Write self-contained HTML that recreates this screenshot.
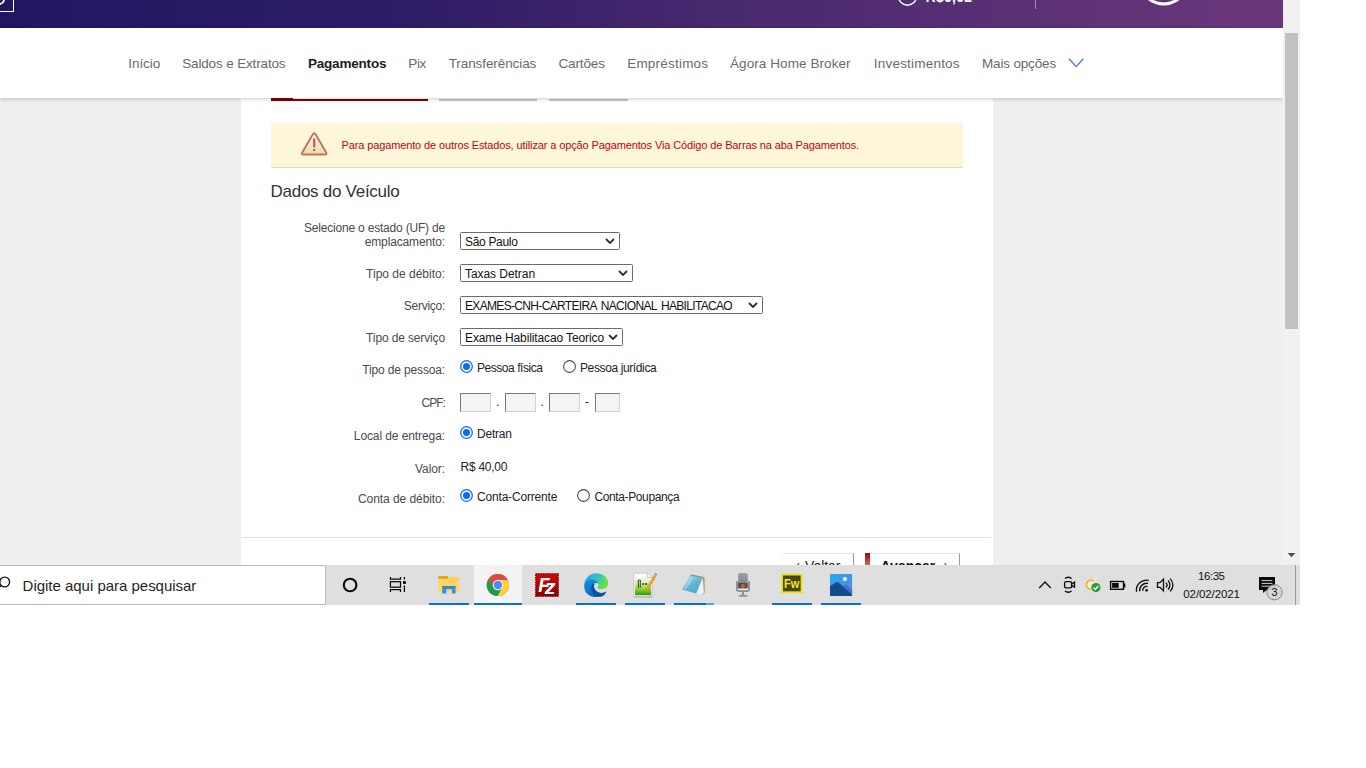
<!DOCTYPE html>
<html lang="pt-BR">
<head>
<meta charset="utf-8">
<title>Pagamentos</title>
<style>
html,body{margin:0;padding:0;background:#fff;}
body{width:1366px;height:768px;position:relative;overflow:hidden;font-family:"Liberation Sans",sans-serif;}
#shot{position:absolute;left:0;top:0;width:1300px;height:605px;overflow:hidden;background:#eeeff1;}
.abs{position:absolute;}
#hdr{left:0;top:0;width:1283px;height:28px;background:linear-gradient(90deg,#201760 0%,#2c1c65 30%,#4b2a70 60%,#6b367a 100%);}
#nav{left:0;top:28px;width:1283px;height:70px;background:#fff;box-shadow:0 1px 4px rgba(0,0,0,.22);}
.nv{position:absolute;top:56px;font-size:13.5px;color:#6a6a6a;white-space:nowrap;line-height:16px;}
.nv.b{color:#1c1c1c;font-weight:bold;}
#card{left:241px;top:98px;width:752px;height:467px;background:#fff;}
.lbl{position:absolute;width:300px;text-align:right;font-size:12px;line-height:14px;color:#4a4a4a;white-space:nowrap;}
.txt{position:absolute;font-size:12px;line-height:14px;color:#222;white-space:nowrap;}
.sel{position:absolute;height:16px;border:1px solid #6b6b6b;border-radius:1.5px;background:#fff;font-size:12px;line-height:16px;color:#111;box-sizing:content-box;white-space:nowrap;}
.sel span{position:absolute;left:4px;top:0.5px;}
.sel svg{position:absolute;right:4px;top:5px;}
.inp{position:absolute;height:17px;border:1px solid #d2d2d2;border-top-color:#767676;border-left-color:#767676;background:#f4f4f4;}
.rad{position:absolute;width:11px;height:11px;border:1px solid #555;border-radius:50%;background:#fff;}
.rad.on{border-color:#1a73e8;}
.rad.on::after{content:"";position:absolute;left:2px;top:2px;width:7px;height:7px;border-radius:50%;background:#1a73e8;}
#task{left:0;top:565px;width:1300px;height:40px;background:#dfdfdf;}
</style>
</head>
<body>
<div id="shot">
  <!-- page content card -->
  <div id="card" class="abs"></div>
<div class="abs" style="left:271px;top:98px;width:22px;height:3px;background:#850000"></div>
<div class="abs" style="left:293px;top:99px;width:135px;height:2px;background:#850000"></div>
<div class="abs" style="left:439px;top:99px;width:98px;height:2px;background:#c4c4c4"></div>
<div class="abs" style="left:549px;top:99px;width:79px;height:2px;background:#c4c4c4"></div>
<div class="abs" style="left:271px;top:123px;width:692px;height:44px;background:#fef6d9;border-bottom:1px solid #e3d9b8"></div>
<svg class="abs" style="left:299px;top:130px" width="30" height="27" viewBox="0 0 30 27"><defs><linearGradient id="wg" x1="0" y1="0" x2="0" y2="1"><stop offset="0" stop-color="#fffbe8"/><stop offset="1" stop-color="#e9dcae"/></linearGradient><linearGradient id="ws" x1="0" y1="0" x2="0" y2="1"><stop offset="0" stop-color="#c86a72"/><stop offset="1" stop-color="#bb7858"/></linearGradient></defs><path d="M13.7 4.5 Q15.2 2 16.7 4.5 L27.2 22.4 Q28.3 24.5 26 24.5 L4.4 24.5 Q2.1 24.5 3.2 22.4 Z" fill="url(#wg)" stroke="url(#ws)" stroke-width="1.9" stroke-linejoin="round"/><rect x="14.1" y="8.2" width="2.2" height="9.3" rx="0.8" fill="#c0603e"/><rect x="14" y="19" width="2.4" height="2.1" rx="0.6" fill="#c0603e"/></svg>
<div class="abs" style="left:341.5px;top:138px;font-size:11px;line-height:14px;color:#c00018;white-space:nowrap;letter-spacing:-0.123px">Para pagamento de outros Estados, utilizar a opção Pagamentos Via Código de Barras na aba Pagamentos.</div>
<div class="abs" style="left:270.5px;top:181px;font-size:17px;line-height:22px;color:#333;white-space:nowrap;letter-spacing:-0.267px">Dados do Veículo</div>
<div class="lbl" style="left:145px;top:221px;letter-spacing:-0.192px;margin-right:0">Selecione o estado (UF) de</div>
<div class="lbl" style="left:145px;top:235px;letter-spacing:-0.135px;margin-right:0">emplacamento:</div>
<div class="lbl" style="left:145px;top:267px;letter-spacing:-0.003px;margin-right:0">Tipo de débito:</div>
<div class="lbl" style="left:145px;top:299px;letter-spacing:-0.270px;margin-right:0">Serviço:</div>
<div class="lbl" style="left:145px;top:331px;letter-spacing:-0.136px;margin-right:0">Tipo de serviço</div>
<div class="lbl" style="left:145px;top:363px;letter-spacing:-0.143px;margin-right:0">Tipo de pessoa:</div>
<div class="lbl" style="left:145px;top:396px;letter-spacing:-0.960px;margin-right:0">CPF:</div>
<div class="lbl" style="left:145px;top:429px;letter-spacing:-0.091px;margin-right:0">Local de entrega:</div>
<div class="lbl" style="left:145px;top:462px;letter-spacing:-0.078px;margin-right:0">Valor:</div>
<div class="lbl" style="left:145px;top:492px;letter-spacing:-0.067px;margin-right:0">Conta de débito:</div>
<div class="sel" style="left:460px;top:232px;width:158px"><span style="letter-spacing:-0.321px">São Paulo</span><svg width="10" height="6" viewBox="0 0 10 6"><path d="M1 1 L5 5 L9 1" fill="none" stroke="#2e2e2e" stroke-width="1.8"/></svg></div>
<div class="sel" style="left:460px;top:264px;width:171px"><span style="letter-spacing:-0.058px">Taxas Detran</span><svg width="10" height="6" viewBox="0 0 10 6"><path d="M1 1 L5 5 L9 1" fill="none" stroke="#2e2e2e" stroke-width="1.8"/></svg></div>
<div class="sel" style="left:460px;top:296px;width:301px"><span style="letter-spacing:-0.67px;word-spacing:2px">EXAMES-CNH-CARTEIRA NACIONAL HABILITACAO</span><svg width="10" height="6" viewBox="0 0 10 6"><path d="M1 1 L5 5 L9 1" fill="none" stroke="#2e2e2e" stroke-width="1.8"/></svg></div>
<div class="sel" style="left:460px;top:328px;width:161px"><span style="letter-spacing:-0.114px">Exame Habilitacao Teorico</span><svg width="10" height="6" viewBox="0 0 10 6"><path d="M1 1 L5 5 L9 1" fill="none" stroke="#2e2e2e" stroke-width="1.8"/></svg></div>
<svg class="abs" style="left:460px;top:360px" width="13" height="13" viewBox="0 0 13 13"><circle cx="6.5" cy="6.5" r="5.8" fill="#fff" stroke="#0a6cf5" stroke-width="1.3"/><circle cx="6.5" cy="6.5" r="3.5" fill="#0a6cf5"/></svg>
<div class="txt" style="left:477px;top:360.8px;letter-spacing:-0.460px">Pessoa física</div>
<svg class="abs" style="left:563px;top:360px" width="13" height="13" viewBox="0 0 13 13"><circle cx="6.5" cy="6.5" r="5.9" fill="#fff" stroke="#4d4d4d" stroke-width="1.1"/></svg>
<div class="txt" style="left:580px;top:360.8px;letter-spacing:-0.383px">Pessoa jurídica</div>
<div class="inp" style="left:460px;top:393px;width:29px"></div>
<div class="inp" style="left:505px;top:393px;width:29px"></div>
<div class="inp" style="left:549px;top:393px;width:29px"></div>
<div class="inp" style="left:595px;top:393px;width:23px"></div>
<div class="txt" style="left:496px;top:395px">.</div><div class="txt" style="left:540.5px;top:395px">.</div><div class="txt" style="left:585px;top:395px">-</div>
<svg class="abs" style="left:460px;top:426.3px" width="13" height="13" viewBox="0 0 13 13"><circle cx="6.5" cy="6.5" r="5.8" fill="#fff" stroke="#0a6cf5" stroke-width="1.3"/><circle cx="6.5" cy="6.5" r="3.5" fill="#0a6cf5"/></svg>
<div class="txt" style="left:477px;top:427px;letter-spacing:-0.205px">Detran</div>
<div class="txt" style="left:460.5px;top:459.5px;letter-spacing:-0.250px">R$ 40,00</div>
<svg class="abs" style="left:460px;top:489px" width="13" height="13" viewBox="0 0 13 13"><circle cx="6.5" cy="6.5" r="5.8" fill="#fff" stroke="#0a6cf5" stroke-width="1.3"/><circle cx="6.5" cy="6.5" r="3.5" fill="#0a6cf5"/></svg>
<div class="txt" style="left:477px;top:489.5px;letter-spacing:-0.180px">Conta-Corrente</div>
<svg class="abs" style="left:577px;top:489px" width="13" height="13" viewBox="0 0 13 13"><circle cx="6.5" cy="6.5" r="5.9" fill="#fff" stroke="#4d4d4d" stroke-width="1.1"/></svg>
<div class="txt" style="left:594.5px;top:489.5px;letter-spacing:-0.384px">Conta-Poupança</div>
<div class="abs" style="left:241px;top:537px;width:750px;height:1px;background:#e2e2e2"></div>
<div class="abs" style="left:783px;top:553px;width:70px;height:30px;background:#fff;border-top:1px solid #e4e4e4;border-right:1px solid #9a9a9a"></div>
<div class="abs" style="left:795.5px;top:556px;font-size:14px;line-height:18px;color:#c00000;">‹</div>
<div class="abs" style="left:805px;top:557px;font-size:14px;line-height:18px;color:#222;letter-spacing:-0.102px">Voltar</div>
<div class="abs" style="left:865px;top:553px;width:94px;height:30px;background:#fff;border-top:1px solid #e4e4e4;border-right:1px solid #9a9a9a"></div>
<div class="abs" style="left:865px;top:553px;width:5px;height:30px;background:linear-gradient(#9a0808 0px,#b43434 6px,#c96666 12px)"></div>
<div class="abs" style="left:880.5px;top:557px;font-size:14px;line-height:18px;color:#111;font-weight:bold;">Avançar</div>
<div class="abs" style="left:943.5px;top:556px;font-size:14px;line-height:18px;color:#c00000;">›</div>

  <!-- header + nav -->
  <div id="hdr" class="abs"></div>
  <div class="abs" style="left:-2px;top:-6px;width:14px;height:16px;border:1px solid #fff"></div>
<svg class="abs" style="left:0;top:0" width="14" height="6" viewBox="0 0 14 6"><circle cx="-1" cy="-0.9" r="5.1" fill="none" stroke="#fff" stroke-width="1.8"/></svg>
<svg class="abs" style="left:896px;top:0" width="24" height="8" viewBox="0 0 24 8"><circle cx="11.5" cy="-3.76" r="9" fill="none" stroke="#fff" stroke-width="1.4"/></svg>
<div class="abs" style="left:925.5px;top:-11.4px;font-size:14px;line-height:16px;font-weight:bold;color:#fff;white-space:nowrap;letter-spacing:0.3px">R$0,02</div>
<div class="abs" style="left:1035px;top:0;width:1px;height:9px;background:#a58bb4"></div>
<svg class="abs" style="left:1144px;top:0" width="40" height="8" viewBox="0 0 40 8"><circle cx="19.7" cy="-19.7" r="23.7" fill="none" stroke="#fff" stroke-width="3"/></svg>
<div id="nav" class="abs"></div>
  <div class="nv" style="left:128.2px;letter-spacing:-0.030px">Início</div>
  <div class="nv" style="left:182.2px;letter-spacing:-0.148px">Saldos e Extratos</div>
  <div class="nv b" style="left:307.9px;letter-spacing:-0.188px">Pagamentos</div>
  <div class="nv" style="left:408.2px;letter-spacing:-0.290px">Pix</div>
  <div class="nv" style="left:448.7px;letter-spacing:-0.086px">Transferências</div>
  <div class="nv" style="left:558.5px;letter-spacing:-0.140px">Cartões</div>
  <div class="nv" style="left:627.2px;letter-spacing:0.212px">Empréstimos</div>
  <div class="nv" style="left:730.0px;letter-spacing:0.082px">Ágora Home Broker</div>
  <div class="nv" style="left:873.8px;letter-spacing:0.208px">Investimentos</div>
  <div class="nv" style="left:982.0px;letter-spacing:-0.164px">Mais opções</div>
  <svg class="abs" style="left:1066px;top:56px" width="20" height="14" viewBox="0 0 20 14"><path d="M3 2.8 L10.2 10.6 L17.4 2.8" fill="none" stroke="#4a6af0" stroke-width="1.3"/></svg>

  <!-- scrollbar -->
  <div class="abs" style="left:1283px;top:0;width:17px;height:565px;background:#f1f1f1"></div>
  <div class="abs" style="left:1285px;top:33px;width:13px;height:296px;background:#c1c1c1"></div>
  <!-- taskbar -->
  <div id="task" class="abs"></div>
<div class="abs" style="left:-1px;top:565px;width:325px;height:38px;background:#fff;border:1px solid #b9b9b9"></div>
<svg class="abs" style="left:-4px;top:574px" width="18" height="22" viewBox="0 0 18 22"><circle cx="8.7" cy="8" r="4.9" fill="none" stroke="#111" stroke-width="1.3"/><path d="M5.2 11.6 L0 17" stroke="#111" stroke-width="1.3"/></svg>
<div class="abs" style="left:22.6px;top:575.5px;font-size:15px;line-height:19px;color:#1f1f1f;white-space:nowrap;letter-spacing:-0.02px">Digite aqui para pesquisar</div>
<div class="abs" style="left:474px;top:565px;width:48px;height:40px;background:#f3f3f3"></div>
<div class="abs" style="left:429px;top:603px;width:40px;height:2px;background:#0b6fd8"></div>
<div class="abs" style="left:474px;top:603px;width:48px;height:2px;background:#0b6fd8"></div>
<div class="abs" style="left:576px;top:603px;width:40px;height:2px;background:#0b6fd8"></div>
<div class="abs" style="left:625px;top:603px;width:40px;height:2px;background:#0b6fd8"></div>
<div class="abs" style="left:674px;top:603px;width:40px;height:2px;background:#0b6fd8"></div>
<div class="abs" style="left:772px;top:603px;width:40px;height:2px;background:#0b6fd8"></div>
<div class="abs" style="left:821px;top:603px;width:40px;height:2px;background:#0b6fd8"></div>
<div class="abs" style="left:706px;top:603px;width:8px;height:2px;background:#5aa2ea"></div>
<svg class="abs" style="left:340px;top:575px" width="20" height="20" viewBox="0 0 20 20"><circle cx="10.1" cy="10" r="6.3" fill="none" stroke="#0a0a0a" stroke-width="2.1"/></svg>
<svg class="abs" style="left:388px;top:575px" width="20" height="20" viewBox="0 0 20 20"><g fill="none" stroke="#0a0a0a" stroke-width="1.25"><path d="M2.4 2 V4 H12.5 V2"/><rect x="2.4" y="6.7" width="10.1" height="5.5"/><path d="M2.4 16.9 V14.7 H12.5 V16.9"/><path d="M16.4 2 V4.5 M16.4 10.4 V16.9"/></g><rect x="15" y="6.1" width="2.9" height="2.8" fill="#0a0a0a"/></svg>
<svg class="abs" style="left:437px;top:574px" width="24" height="22" viewBox="0 0 24 22"><defs><linearGradient id="fg" x1="0" y1="0" x2="0" y2="1"><stop offset="0" stop-color="#fbd25c"/><stop offset="1" stop-color="#fdd970"/></linearGradient></defs><rect x="1.3" y="3" width="20.8" height="15.6" rx="0.7" fill="url(#fg)"/><path d="M1.3 2.6 Q1.3 2 1.9 2 H9.8 Q10.4 2 10.6 2.5 L11.2 4.7 H1.3Z" fill="#e3a20d"/><path d="M5.2 12.6 Q5.2 12 5.8 12 H17.9 Q18.5 12 18.5 12.6 V19.5 H15 V15.3 H9.3 V19.5 H5.2 Z" fill="#3b8edb"/><path d="M5.2 12.6 Q5.2 12 5.8 12 H17.9 Q18.5 12 18.5 12.6 V13.6 H5.2Z" fill="#3384d0"/></svg>
<svg class="abs" style="left:486px;top:573px" width="24" height="24" viewBox="-12.2 -12.3 24.6 24.6"><circle r="11.4" fill="#dd4b3e"/><path d="M-4.50 2.60 L-9.58 -6.19 A11.4 11.4 0 0 1 10.14 -5.20 L0.00 -5.20 Z" fill="#dd4b3e"/><path d="M0.00 -5.20 L10.14 -5.20 A11.4 11.4 0 0 1 -0.57 11.39 L4.50 2.60 Z" fill="#fdd03b"/><path d="M4.50 2.60 L-0.57 11.39 A11.4 11.4 0 0 1 -9.58 -6.19 L-4.50 2.60 Z" fill="#1a9c55"/><circle r="5.3" fill="#f3f3f3"/><circle r="4.25" fill="#4a8af4"/></svg>
<svg class="abs" style="left:535px;top:573px" width="24" height="24" viewBox="0 0 24 24"><defs><linearGradient id="fzg" x1="0" y1="0" x2="0" y2="1"><stop offset="0" stop-color="#c90808"/><stop offset="0.5" stop-color="#b00606"/><stop offset="1" stop-color="#860000"/></linearGradient></defs><rect x="0.6" y="0.6" width="22.8" height="22.8" fill="url(#fzg)" stroke="#8e0a0a" stroke-width="1.2" stroke-dasharray="1.3 1.1"/><text font-family="Liberation Sans, sans-serif" font-size="21" font-weight="bold" font-style="italic" fill="#fff"><tspan x="3.3" y="19" textLength="11.3" lengthAdjust="spacingAndGlyphs">F</tspan><tspan x="9.8" y="21" textLength="10.8" lengthAdjust="spacingAndGlyphs">z</tspan></text></svg>
<svg class="abs" style="left:584px;top:572.6px" width="24.4" height="24.4" viewBox="0 0 24.4 24.4"><defs><linearGradient id="eg1" x1="0" y1="0.2" x2="1" y2="0.6"><stop offset="0" stop-color="#2aa4ee"/><stop offset="0.5" stop-color="#2fc0c8"/><stop offset="0.85" stop-color="#5fe04e"/><stop offset="1" stop-color="#63e24a"/></linearGradient><linearGradient id="eg2" x1="0" y1="0" x2="0.3" y2="1"><stop offset="0" stop-color="#1590e0"/><stop offset="1" stop-color="#0a68c6"/></linearGradient></defs>
<path d="M0.3 11 C1 4.6 6.2 0.2 12.4 0.2 C19.4 0.2 24.2 5 24.2 9.8 C24.2 13.8 21 16 17.6 16 C15.2 16 13.5 15.3 13.1 14.7 C14.4 13.8 14.9 12.2 14.3 10.8 C13.4 8.6 10.8 7 7.8 7 C4.4 7 1.2 8.6 0.3 11Z" fill="url(#eg1)"/>
<path d="M0.2 12.4 C0.2 9.2 3 6.6 7.4 6.6 C10.8 6.6 13.6 8.4 14.4 10.8 C13 9.6 10.4 9.8 9.4 12 C8 15.6 10.5 21 16.4 22.4 C13.6 24.8 7 25 3 20.6 C1 18.4 0.2 15.4 0.2 12.4Z" fill="url(#eg2)"/>
<path d="M9.3 10.4 C7.4 11.4 6.6 14.4 7.4 17.2 C8.8 22 13.8 24.8 18 23.4 C20.4 22.6 22.2 20.2 22.3 18.2 C19.8 20.2 16 20.6 13.2 18.6 C10.2 16.4 9.4 13.2 10.6 11 C10.2 10.6 9.8 10.4 9.3 10.4Z" fill="#0d53a4"/></svg>
<svg class="abs" style="left:633px;top:572px" width="26" height="26" viewBox="0 0 26 26"><defs><linearGradient id="ng" x1="0" y1="0" x2="0" y2="1"><stop offset="0" stop-color="#ffffff"/><stop offset="0.2" stop-color="#eef4ee"/><stop offset="0.45" stop-color="#d6ee9a"/><stop offset="0.75" stop-color="#7ccc28"/><stop offset="1" stop-color="#2a9a10"/></linearGradient></defs><path d="M0.9 24.9 H19.6" stroke="#8e8e8e" stroke-width="0.9"/><path d="M0.9 1.2 H14.2 L19.3 5.6 V24.3 H0.9 Z" fill="#fff" stroke="#bdbdbd" stroke-width="0.7"/><path d="M2 2.4 H13.6 L18.2 6.4 V23.2 H2 Z" fill="url(#ng)"/><path d="M14.2 1.4 V5.6 H19" fill="#f4f4f4" stroke="#a8a8a8" stroke-width="0.6"/><path d="M5.3 8 V15.6 M7.3 8 V15.6" stroke="#222" stroke-width="0.9"/><path d="M5.3 8 H7.3" stroke="#444" stroke-width="0.7"/><path d="M9.2 12 H11.2 M12.2 12 H14.2" stroke="#2a2a2a" stroke-width="1.5"/><path d="M21.2 3.2 L23 4.4 L14.2 18.6 L12.6 19.8 L12.7 17.4 Z" fill="#f2a51c" stroke="#c27a12" stroke-width="0.4"/><path d="M21.2 3.2 L23 4.4 L23.6 3.2 L21.9 2.1Z" fill="#9aa7b4"/><path d="M21.9 2.1 L23.6 3.2 L23.9 2.2 C23.6 1.4 22.8 1.1 22.3 1.3Z" fill="#d63a48"/></svg>
<svg class="abs" style="left:681px;top:573px" width="26" height="24" viewBox="0 0 26 24"><defs><linearGradient id="np" x1="0.2" y1="0" x2="0.7" y2="1"><stop offset="0" stop-color="#9fd8ea"/><stop offset="0.5" stop-color="#63b6d2"/><stop offset="1" stop-color="#4fa6c6"/></linearGradient></defs><path d="M22 3.9 L23.5 5 L23.7 19.6 L21 22 Z" fill="#b58a4a"/><path d="M21.6 4.4 L22.9 19.6 L20.2 22.2 L15.1 20.4 Z" fill="#eef3f6" stroke="#c9d3d9" stroke-width="0.4"/><path d="M9.9 1.6 L22 3.9 L15.1 20.6 L1 16.4 Z" fill="url(#np)"/><path d="M9.9 1.4 L22.2 3.7 L21.8 5 L9.5 2.7Z" fill="#8c9496"/><path d="M9 4 L13 5 L5 16.4 L2.4 15.6Z" fill="#b5e2ef" opacity="0.55"/></svg>
<svg class="abs" style="left:733px;top:572px" width="20" height="26" viewBox="0 0 20 26"><defs><linearGradient id="mg" x1="0" y1="0" x2="0" y2="1"><stop offset="0" stop-color="#9da1a7"/><stop offset="1" stop-color="#84888e"/></linearGradient></defs><path d="M4 9.3 V17.6 Q4 19 5.4 19 H14.6 Q16 19 16 17.6 V9.3" fill="#f4f4f4" stroke="#8d9198" stroke-width="2"/><path d="M5.1 3 Q5.1 1.1 7 1.1 H12.9 Q14.8 1.1 14.8 3 V11 H5.1Z" fill="url(#mg)"/><path d="M5.1 10.9 H14.8 V15.6 Q14.8 16.6 13.8 16.6 H6.1 Q5.1 16.6 5.1 15.6Z" fill="#4b4e54"/><circle cx="9.9" cy="13.9" r="2" fill="#f0541a"/><rect x="9" y="20" width="2" height="3.2" fill="#8d9198"/><rect x="5.8" y="22.9" width="8.4" height="1.8" fill="#8d9198"/></svg>
<svg class="abs" style="left:780px;top:573px" width="24" height="22" viewBox="0 0 24 22"><rect x="2.1" y="1.6" width="19.4" height="17.6" fill="#48451a" stroke="#e9e50a" stroke-width="1.8"/><text x="4" y="15.1" font-family="Liberation Sans, sans-serif" font-size="12.4" font-weight="bold" fill="#f2ec1e" textLength="15.4" lengthAdjust="spacingAndGlyphs">Fw</text></svg>
<svg class="abs" style="left:829px;top:573px" width="24" height="24" viewBox="0 0 24 24"><defs><linearGradient id="pg" x1="0" y1="0" x2="1" y2="0.4"><stop offset="0" stop-color="#27a9ea"/><stop offset="1" stop-color="#4e8fe2"/></linearGradient></defs><rect x="1" y="1" width="22.1" height="22" rx="0.8" fill="url(#pg)"/><path d="M14.2 13.8 L16.6 12 H18 L23.1 16.6 V22Z" fill="#4c6ccc"/><path d="M1 13.2 L7 9.2 H9.4 L23.1 21.8 V22.2 Q23.1 23 22.3 23 H1.8 Q1 23 1 22.2Z" fill="#154b8c"/><circle cx="15.9" cy="6.1" r="2" fill="#fff"/></svg>
<svg class="abs" style="left:1037px;top:578px" width="16" height="12" viewBox="0 0 16 12"><path d="M2.2 10 L8 4 L13.8 10" fill="none" stroke="#111" stroke-width="1.3"/></svg>
<svg class="abs" style="left:1062px;top:575px" width="14" height="20" viewBox="0 0 14 20"><g fill="none" stroke="#0c0c0c" stroke-width="1.35"><rect x="2.6" y="6.6" width="7" height="6.2" rx="1.3"/><path d="M9.6 8.8 L12.5 7.2 V12.2 L9.6 10.6"/><path d="M3 3.6 C4.6 1.8 8 1.8 9.6 3.6"/><path d="M3 15.9 C4.6 17.7 8 17.7 9.6 15.9"/></g></svg>
<svg class="abs" style="left:1084px;top:576px" width="18" height="18" viewBox="0 0 18 18"><circle cx="7" cy="8.8" r="4.7" fill="#ececec" stroke="#f3f3f3" stroke-width="1.6"/><path d="M7 13.5 A4.7 4.7 0 1 1 10.6 5.8" fill="none" stroke="#f6b414" stroke-width="1.7"/><path d="M9.6 6.2 L13.6 1.2" stroke="#f7efc8" stroke-width="0.9"/><circle cx="11.9" cy="11.6" r="4.6" fill="#1f9e3a"/><path d="M9.5 11.6 L11.3 13.4 L14.3 10" fill="none" stroke="#fff" stroke-width="1.4"/></svg>
<svg class="abs" style="left:1109px;top:580px" width="18" height="12" viewBox="0 0 18 12"><rect x="1.6" y="1.5" width="12.9" height="7.8" fill="none" stroke="#0a0a0a" stroke-width="1.4"/><rect x="3.1" y="3" width="6.6" height="4.8" fill="#0a0a0a"/><rect x="15" y="3.5" width="1.4" height="4" fill="#0a0a0a"/></svg>
<svg class="abs" style="left:1134px;top:578px" width="16" height="16" viewBox="0 0 16 16"><g fill="none" stroke="#0c0c0c" stroke-width="1.3"><path d="M2.50 13.72 A10.2 10.2 0 0 1 14.72 2.32"/><path d="M5.67 13.27 A7 7 0 0 1 14.06 5.45"/><path d="M8.74 12.84 A3.9 3.9 0 0 1 13.41 8.49"/></g><circle cx="12.6" cy="12.3" r="1.35" fill="#0c0c0c"/></svg>
<svg class="abs" style="left:1156px;top:577px" width="19" height="16" viewBox="0 0 19 16"><g fill="none" stroke="#0c0c0c" stroke-width="1.3"><path d="M1.5 5.6 H4 L7.5 2.1 V13.9 L4 10.4 H1.5 Z"/><path d="M9.9 5.6 A3.4 3.4 0 0 1 9.9 10.4"/><path d="M12 3.6 A6 6 0 0 1 12 12.4"/><path d="M14.1 1.6 A8.8 8.8 0 0 1 14.1 14.4"/></g></svg>
<div class="abs" style="left:1159.3px;top:568.5px;width:104px;text-align:center;font-size:11.5px;line-height:14px;color:#111;white-space:nowrap;letter-spacing:-0.45px">16:35</div>
<div class="abs" style="left:1159.6px;top:586.7px;width:104px;text-align:center;font-size:11.5px;line-height:14px;color:#111;white-space:nowrap;letter-spacing:-0.1px">02/02/2021</div>
<svg class="abs" style="left:1257px;top:575px" width="28" height="28" viewBox="0 0 28 28"><path d="M2 2 H18 V15 H9.6 L6 18 V15 H2 Z" fill="#0a0a0a"/><path d="M4.6 5.6 H15.4 M4.6 8.4 H15.4 M4.6 11.2 H15.4" stroke="#e6e6e6" stroke-width="0.9"/><circle cx="17.5" cy="17.3" r="7.6" fill="#d6d6d6" fill-opacity="0.93" stroke="#7a7a7a" stroke-width="0.9"/><text x="14.6" y="21.2" font-family="Liberation Sans, sans-serif" font-size="11" fill="#111">3</text></svg>
<div class="abs" style="left:1295px;top:565px;width:1px;height:40px;background:#9c9c9c"></div>
<svg class="abs" style="left:1286px;top:551px" width="11" height="8" viewBox="0 0 11 8"><path d="M1.6 2 H9.4 L5.5 6.2Z" fill="#505050"/></svg>

</div>
</body>
</html>
